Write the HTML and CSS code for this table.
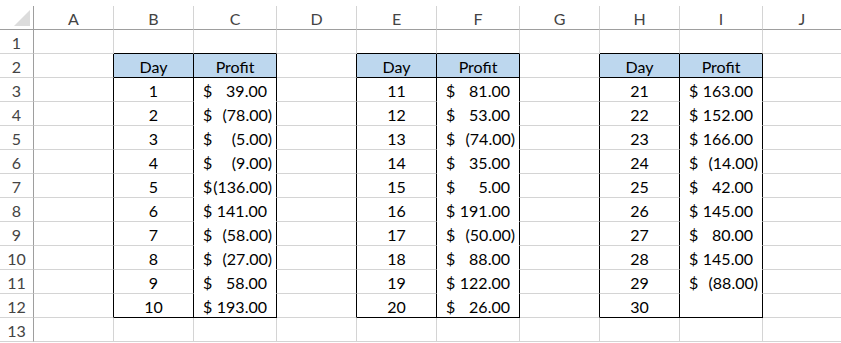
FILE: index.html
```html
<!DOCTYPE html>
<html lang="en">
<head>
    <meta charset="UTF-8">
    <meta name="viewport" content="width=device-width, initial-scale=1.0">
    <title>Profit by Day</title>
    <link rel="stylesheet" href="styles.css">
</head>
<body>
    <div class="sheet">
        <!-- column headers -->
        <div class="corner">
            <svg width="16" height="16" viewBox="0 0 16 16"><polygon points="16,0 16,16 0,16" fill="#dcdcdc"/></svg>
        </div>
        <div class="col">A</div>
        <div class="col">B</div>
        <div class="col">C</div>
        <div class="col">D</div>
        <div class="col">E</div>
        <div class="col">F</div>
        <div class="col">G</div>
        <div class="col">H</div>
        <div class="col">I</div>
        <div class="col end">J</div>

        <!-- row 1 -->
        <div class="rh">1</div>
        <div class="c"></div><div class="c above"></div><div class="c above"></div>
        <div class="c"></div><div class="c above"></div><div class="c above"></div>
        <div class="c"></div><div class="c above"></div><div class="c above"></div>
        <div class="c end"></div>

        <!-- row 2 -->
        <div class="rh">2</div>
        <div class="c edge"></div><div class="hd">Day</div><div class="hd">Profit</div>
        <div class="c edge"></div><div class="hd">Day</div><div class="hd">Profit</div>
        <div class="c edge"></div><div class="hd">Day</div><div class="hd">Profit</div>
        <div class="c end"></div>

        <!-- row 3 -->
        <div class="rh">3</div>
        <div class="c edge"></div><div class="day">1</div><div class="amt"><span>$</span><span class="pos">39.00</span></div>
        <div class="c edge"></div><div class="day">11</div><div class="amt"><span>$</span><span class="pos">81.00</span></div>
        <div class="c edge"></div><div class="day">21</div><div class="amt"><span>$</span><span class="pos">163.00</span></div>
        <div class="c end"></div>

        <!-- row 4 -->
        <div class="rh">4</div>
        <div class="c edge"></div><div class="day">2</div><div class="amt"><span>$</span><span>(78.00)</span></div>
        <div class="c edge"></div><div class="day">12</div><div class="amt"><span>$</span><span class="pos">53.00</span></div>
        <div class="c edge"></div><div class="day">22</div><div class="amt"><span>$</span><span class="pos">152.00</span></div>
        <div class="c end"></div>

        <!-- row 5 -->
        <div class="rh">5</div>
        <div class="c edge"></div><div class="day">3</div><div class="amt"><span>$</span><span>(5.00)</span></div>
        <div class="c edge"></div><div class="day">13</div><div class="amt"><span>$</span><span>(74.00)</span></div>
        <div class="c edge"></div><div class="day">23</div><div class="amt"><span>$</span><span class="pos">166.00</span></div>
        <div class="c end"></div>

        <!-- row 6 -->
        <div class="rh">6</div>
        <div class="c edge"></div><div class="day">4</div><div class="amt"><span>$</span><span>(9.00)</span></div>
        <div class="c edge"></div><div class="day">14</div><div class="amt"><span>$</span><span class="pos">35.00</span></div>
        <div class="c edge"></div><div class="day">24</div><div class="amt"><span>$</span><span>(14.00)</span></div>
        <div class="c end"></div>

        <!-- row 7 -->
        <div class="rh">7</div>
        <div class="c edge"></div><div class="day">5</div><div class="amt"><span>$</span><span>(136.00)</span></div>
        <div class="c edge"></div><div class="day">15</div><div class="amt"><span>$</span><span class="pos">5.00</span></div>
        <div class="c edge"></div><div class="day">25</div><div class="amt"><span>$</span><span class="pos">42.00</span></div>
        <div class="c end"></div>

        <!-- row 8 -->
        <div class="rh">8</div>
        <div class="c edge"></div><div class="day">6</div><div class="amt"><span>$</span><span class="pos">141.00</span></div>
        <div class="c edge"></div><div class="day">16</div><div class="amt"><span>$</span><span class="pos">191.00</span></div>
        <div class="c edge"></div><div class="day">26</div><div class="amt"><span>$</span><span class="pos">145.00</span></div>
        <div class="c end"></div>

        <!-- row 9 -->
        <div class="rh">9</div>
        <div class="c edge"></div><div class="day">7</div><div class="amt"><span>$</span><span>(58.00)</span></div>
        <div class="c edge"></div><div class="day">17</div><div class="amt"><span>$</span><span>(50.00)</span></div>
        <div class="c edge"></div><div class="day">27</div><div class="amt"><span>$</span><span class="pos">80.00</span></div>
        <div class="c end"></div>

        <!-- row 10 -->
        <div class="rh">10</div>
        <div class="c edge"></div><div class="day">8</div><div class="amt"><span>$</span><span>(27.00)</span></div>
        <div class="c edge"></div><div class="day">18</div><div class="amt"><span>$</span><span class="pos">88.00</span></div>
        <div class="c edge"></div><div class="day">28</div><div class="amt"><span>$</span><span class="pos">145.00</span></div>
        <div class="c end"></div>

        <!-- row 11 -->
        <div class="rh">11</div>
        <div class="c edge"></div><div class="day">9</div><div class="amt"><span>$</span><span class="pos">58.00</span></div>
        <div class="c edge"></div><div class="day">19</div><div class="amt"><span>$</span><span class="pos">122.00</span></div>
        <div class="c edge"></div><div class="day">29</div><div class="amt"><span>$</span><span>(88.00)</span></div>
        <div class="c end"></div>

        <!-- row 12 -->
        <div class="rh">12</div>
        <div class="c edge"></div><div class="day last">10</div><div class="amt last"><span>$</span><span class="pos">193.00</span></div>
        <div class="c edge"></div><div class="day last">20</div><div class="amt last"><span>$</span><span class="pos">26.00</span></div>
        <div class="c edge"></div><div class="day last">30</div><div class="amt last"></div>
        <div class="c end"></div>

        <!-- row 13 -->
        <div class="rh">13</div>
        <div class="c"></div><div class="c"></div><div class="c"></div>
        <div class="c"></div><div class="c"></div><div class="c"></div>
        <div class="c"></div><div class="c"></div><div class="c"></div>
        <div class="c end"></div>
    </div>
</body>
</html>
```

FILE: styles.css
```css
* {
    margin: 0;
    padding: 0;
    box-sizing: border-box;
}

body {
    font-family: Lato, 'Liberation Sans', sans-serif;
    font-size: 16px;
    background: #ffffff;
    color: #000000;
    overflow: hidden;
}

.sheet {
    display: grid;
    grid-template-columns: 34px 80px 80px 83px 80px 80px 83px 80px 80px 83px 1fr;
    grid-auto-rows: 24px;
    margin-top: 6px;
}

.sheet > div {
    border-right: 1px solid #d4d4d4;
    border-bottom: 1px solid #d4d4d4;
    display: flex;
    align-items: center;
    white-space: nowrap;
}

.corner {
    justify-content: flex-end;
    align-items: flex-end !important;
    padding: 0 3px 3px 0;
    border-right-color: #9e9e9e !important;
    border-bottom-color: #9e9e9e !important;
}

.corner svg {
    display: block;
}

.col {
    justify-content: center;
    color: #444444;
    border-bottom-color: #9e9e9e !important;
    padding-top: 1px;
}

.rh {
    justify-content: center;
    color: #444444;
    border-right-color: #9e9e9e !important;
    padding-top: 1px;
}

.sheet > .end {
    border-right: none;
}

.sheet > .above {
    border-bottom-color: #000000;
}

.sheet > .edge {
    border-right-color: #000000;
}

.sheet > .hd {
    justify-content: center;
    background: #bdd7ee;
    border-right-color: #000000;
    border-bottom-color: #000000;
    padding-top: 1px;
}

.day {
    justify-content: center;
    border-right-color: #000000 !important;
    padding-top: 1px;
}

.amt {
    justify-content: space-between;
    background: #ffffff;
    border-right-color: #000000 !important;
    border-bottom-color: #ffffff !important;
    padding: 1px 4px 0 9px;
}

.amt .pos {
    padding-right: 5px;
}

.sheet > .last {
    border-bottom-color: #000000 !important;
}
```
